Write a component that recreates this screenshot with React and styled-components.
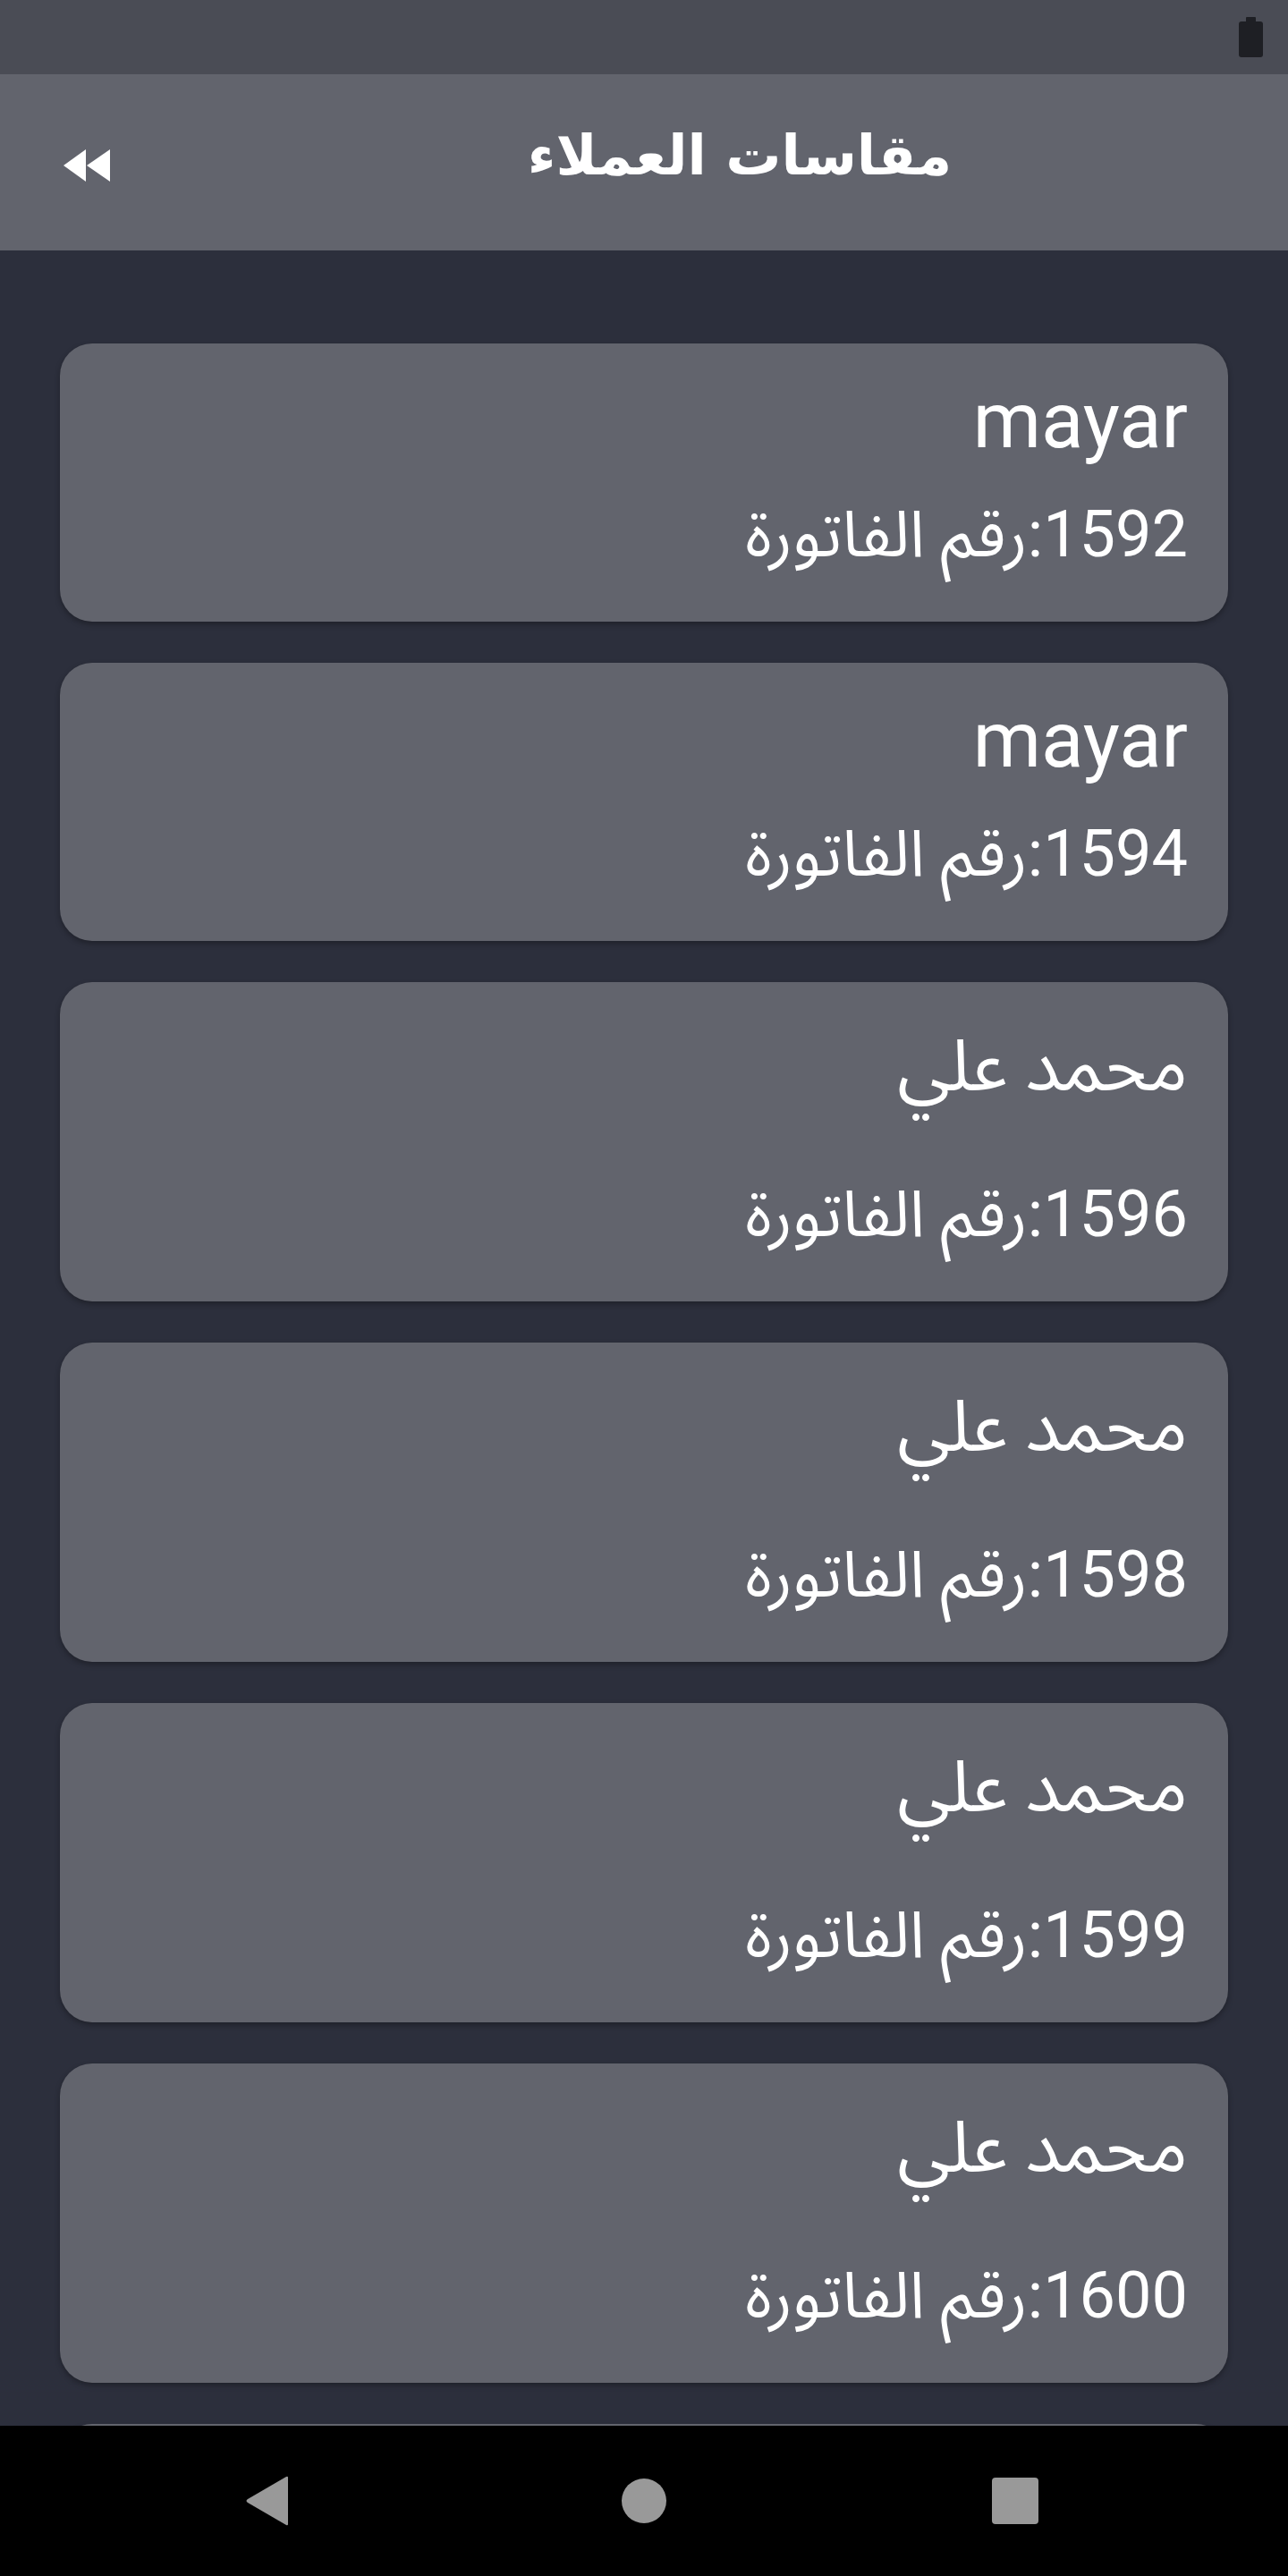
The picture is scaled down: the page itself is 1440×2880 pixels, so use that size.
import React from "react";
import styled, { createGlobalStyle } from "styled-components";

const GlobalStyle = createGlobalStyle`
  html, body {
    margin: 0;
    padding: 0;
    background: #2c2f3c;
  }
  * { box-sizing: border-box; }
`;

const Screen = styled.div`
  width: 1440px;
  height: 2880px;
  display: flex;
  flex-direction: column;
  overflow: hidden;
  background: #2c2f3c;
  font-family: Roboto, "Noto Sans Arabic", "DejaVu Sans", sans-serif;
  color: #ffffff;
`;

const StatusBar = styled.div`
  height: 83px;
  flex: 0 0 83px;
  background: #4a4c55;
  display: flex;
  justify-content: flex-end;
  align-items: flex-start;
  padding: 19px 28px 0 0;
`;

const Battery = styled.div`
  display: flex;
  flex-direction: column;
  align-items: center;
`;

const BatteryCap = styled.div`
  width: 11px;
  height: 5px;
  background: #1e1f24;
  border-radius: 1px 1px 0 0;
`;

const BatteryBody = styled.div`
  width: 27px;
  height: 40px;
  background: #1e1f24;
  border-radius: 3px;
`;

const Header = styled.header`
  height: 197px;
  flex: 0 0 197px;
  background: #62646d;
  display: flex;
  align-items: center;
  padding-left: 71px;
`;

const BackButton = styled.div`
  width: 52px;
  height: 36px;
  margin-top: 7px;
  display: flex;
`;

const Title = styled.h1`
  flex: 1;
  margin: 0;
  padding: 0 0 16px 91px;
  text-align: center;
  font-family: "DejaVu Sans", sans-serif;
  font-weight: bold;
  font-size: 62px;
  line-height: 1;
  color: #ffffff;
  direction: rtl;
`;

const Content = styled.main`
  flex: 1;
  overflow: hidden;
  padding: 104px 67px 0;
  display: flex;
  flex-direction: column;
  gap: 46px;
`;

const Card = styled.div`
  flex: 0 0 auto;
  background: #62646d;
  border-radius: 36px;
  box-shadow: 0 3px 6px rgba(0, 0, 0, 0.3);
  padding: 31px 45px 47px;
  display: flex;
  flex-direction: column;
  gap: 23px;
  direction: rtl;
  text-align: right;
`;

const Name = styled.div`
  font-size: ${(p) => (p.$arabic ? "80px" : "87px")};
  line-height: ${(p) => (p.$arabic ? "126px" : "110px")};
  padding-bottom: ${(p) => (p.$arabic ? "30px" : "0")};
  white-space: nowrap;
`;

const Invoice = styled.div`
  font-size: 72px;
  line-height: 100px;
  white-space: nowrap;
`;

const NavBar = styled.nav`
  height: 168px;
  flex: 0 0 168px;
  background: #000000;
  display: grid;
  grid-template-columns: 600px 240px 600px;
  align-items: center;
  justify-items: center;
`;

const NavSlot = styled.div`
  display: flex;
  align-items: center;
  justify-content: ${(p) => p.$justify || "center"};
  width: 100%;
  padding: ${(p) => p.$pad || "0"};
`;

const HomeDot = styled.div`
  width: 50px;
  height: 50px;
  border-radius: 50%;
  background: #999999;
`;

const RecentSquare = styled.div`
  width: 52px;
  height: 52px;
  border-radius: 4px;
  background: #999999;
`;

const items = [
  { name: "mayar", id: 1592 },
  { name: "mayar", id: 1594 },
  { name: "محمد علي", id: 1596, arabic: true },
  { name: "محمد علي", id: 1598, arabic: true },
  { name: "محمد علي", id: 1599, arabic: true },
  { name: "محمد علي", id: 1600, arabic: true },
  { name: "محمد علي", id: 1601, arabic: true },
];

export default function App() {
  return (
    <>
      <GlobalStyle />
      <Screen>
        <StatusBar>
          <Battery>
            <BatteryCap />
            <BatteryBody />
          </Battery>
        </StatusBar>
        <Header>
          <BackButton>
            <svg width="52" height="36" viewBox="0 0 52 36">
              <polygon points="0,18 25,0 25,36" fill="#ffffff" />
              <polygon points="26,18 52,0 52,36" fill="#ffffff" />
            </svg>
          </BackButton>
          <Title>مقاسات العملاء</Title>
        </Header>
        <Content>
          {items.map((it, i) => (
            <Card key={i}>
              <Name $arabic={it.arabic}>{it.name}</Name>
              <Invoice>{`${it.id}:رقم الفاتورة`}</Invoice>
            </Card>
          ))}
        </Content>
        <NavBar>
          <NavSlot $justify="flex-end" $pad="0 276px 0 0">
            <svg width="50" height="56" viewBox="0 0 50 56">
              <path
                d="M48 2 L48 54 Q48 56 46 55 L3 30 Q0 28 3 26 L46 1 Q48 0 48 2 Z"
                fill="#999999"
              />
            </svg>
          </NavSlot>
          <NavSlot>
            <HomeDot />
          </NavSlot>
          <NavSlot $justify="flex-start" $pad="0 0 0 269px">
            <RecentSquare />
          </NavSlot>
        </NavBar>
      </Screen>
    </>
  );
}
